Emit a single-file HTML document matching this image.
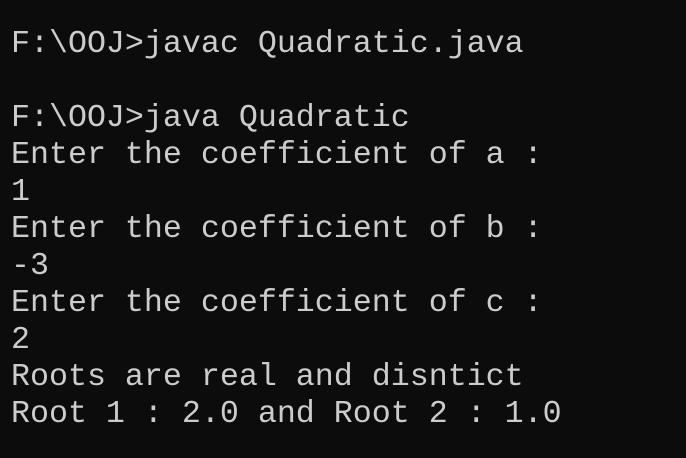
<!DOCTYPE html>
<html><head><style>
html,body{margin:0;padding:0;background:#0c0c0c;width:686px;height:458px;overflow:hidden}
pre{margin:0;position:absolute;left:11px;top:26px;font-family:"Liberation Mono","DejaVu Sans Mono",monospace;font-size:31.65px;line-height:37px;color:#cccccc;white-space:pre}
</style></head><body>
<pre>F:\OOJ>javac Quadratic.java

F:\OOJ>java Quadratic
Enter the coefficient of a :
1
Enter the coefficient of b :
-3
Enter the coefficient of c :
2
Roots are real and disntict
Root 1 : 2.0 and Root 2 : 1.0</pre>
</body></html>
